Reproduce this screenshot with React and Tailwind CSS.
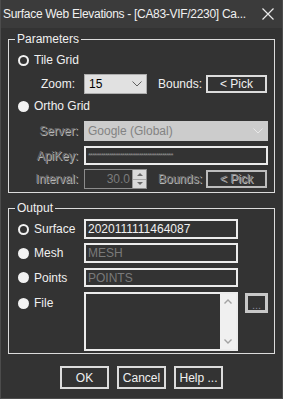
import React from "react";

/* ─── Small pieces ─────────────────────────────────────── */

function Radio({ checked }) {
  return checked ? (
    <span className="inline-block w-[11px] h-[11px] rounded-full border-2 border-[#f2f2f2] bg-[#333333] shrink-0" />
  ) : (
    <span className="inline-block w-[11px] h-[11px] rounded-full bg-[#f2f2f2] shrink-0" />
  );
}

function Chevron({ color = "#606060" }) {
  return (
    <svg width="10" height="6" viewBox="0 0 10 6" className="shrink-0">
      <path d="M0.5 0.5 L5 5 L9.5 0.5" fill="none" stroke={color} strokeWidth="1" />
    </svg>
  );
}

function GroupBox({ title, className = "", children }) {
  return (
    <div className={`relative mx-[7px] border border-[#dcdcdc] ${className}`}>
      <span className="absolute -top-[9px] left-[6px] bg-[#333333] px-[2px] leading-[16px] text-[#f0f0f0]">
        {title}
      </span>
      {children}
    </div>
  );
}

function PickButton({ disabled }) {
  return (
    <div
      className={`w-[61px] h-[18px] border-2 flex items-center justify-center leading-none ${
        disabled
          ? "border-[#bdbdbd] text-[#8c8c8c] [text-shadow:1px_1px_0_#bcbcbc]"
          : "border-[#dcdcdc] text-[#f0f0f0]"
      }`}
    >
      &lt; Pick
    </div>
  );
}

const dimLabel = "text-[#6a6a6a] [text-shadow:1px_1px_0_#b8b8b8]";

/* ─── Main ─────────────────────────────────────────────── */

export default function App() {
  return (
    <div className="w-[283px] h-[399px] bg-[#333333] border border-t-0 border-[#4c4c4c] text-[12px] font-['Liberation_Sans',Arial,sans-serif] select-none overflow-hidden">
      {/* Title bar */}
      <div className="h-[28px] bg-[#3b3b3b] flex items-center pl-[3px] pr-[9px] -mx-px">
        <span className="text-[#f0f0f0] text-[12px] tracking-[-0.3px] whitespace-nowrap">
          Surface Web Elevations - [CA83-VIF/2230] Ca...
        </span>
        <svg width="12" height="12" viewBox="0 0 12 12" className="ml-auto">
          <path d="M0.5 0.5 L11.5 11.5 M11.5 0.5 L0.5 11.5" stroke="#eaeaea" strokeWidth="1.2" />
        </svg>
      </div>

      {/* Parameters */}
      <GroupBox title="Parameters" className="mt-[11px] h-[154px]">
        {/* Tile grid */}
        <div className="mt-[13px] h-[14px] pl-[9px] flex items-center gap-[5px] text-[#f0f0f0]">
          <Radio checked />
          <span>Tile Grid</span>
        </div>

        <div className="mt-[7px] h-[20px] flex items-center">
          <span className="w-[66px] text-right text-[#f0f0f0]">Zoom:</span>
          <div className="ml-[9px] w-[63px] h-[20px] bg-[#e1e1e1] border border-[#adadad] flex items-center pl-[4px] pr-[4px] text-[#000000]">
            <span>15</span>
            <span className="ml-auto"><Chevron /></span>
          </div>
          <span className="ml-[11px] w-[48px] text-[#f0f0f0]">Bounds:</span>
          <PickButton />
        </div>

        {/* Ortho grid */}
        <div className="mt-[5px] h-[14px] pl-[9px] flex items-center gap-[5px] text-[#f0f0f0]">
          <Radio />
          <span>Ortho Grid</span>
        </div>

        <div className="mt-[8px] h-[20px] flex items-center">
          <span className={`w-[69px] text-right ${dimLabel}`}>Server:</span>
          <div className="ml-[6px] w-[184px] h-[20px] bg-[#cccccc] flex items-center pl-[4px] pr-[5px] text-[#838383]">
            <span>Google (Global)</span>
            <span className="ml-auto"><Chevron color="#e8e8e8" /></span>
          </div>
        </div>

        <div className="mt-[5px] h-[19px] flex items-center">
          <span className={`w-[69px] text-right ${dimLabel}`}>ApiKey:</span>
          <div className="ml-[6px] w-[184px] h-[19px] border-2 border-[#ececec] flex items-center pl-[2px] overflow-hidden">
            <span className="text-[8px] leading-none tracking-[-1px] text-[#8a8a8a] whitespace-nowrap">
              {"*".repeat(40)}
            </span>
          </div>
        </div>

        <div className="mt-[4px] h-[20px] flex items-center">
          <span className={`w-[69px] text-right ${dimLabel}`}>Interval:</span>
          <div className="ml-[6px] w-[63px] h-[20px] border border-[#8c8c8c] flex items-stretch">
            <span className="flex-1 text-right pr-[2px] leading-[18px] text-[#7c7c7c]">30.0</span>
            <div className="w-[14px] flex flex-col bg-[#dadada] border-l border-[#9a9a9a]">
              <div className="flex-1 flex items-center justify-center border-b border-[#a8a8a8]">
                <span className="w-0 h-0 border-l-[3px] border-r-[3px] border-b-[3px] border-l-transparent border-r-transparent border-b-[#6a6a6a]" />
              </div>
              <div className="flex-1 flex items-center justify-center">
                <span className="w-0 h-0 border-l-[3px] border-r-[3px] border-t-[3px] border-l-transparent border-r-transparent border-t-[#6a6a6a]" />
              </div>
            </div>
          </div>
          <span className={`ml-[11px] w-[48px] ${dimLabel}`}>Bounds:</span>
          <PickButton disabled />
        </div>
      </GroupBox>

      {/* Output */}
      <GroupBox title="Output" className="mt-[15px] h-[146px]">
        {[
          { label: "Surface", value: "2020111111464087", checked: true, mt: "mt-[10px]", h: "h-[20px]" },
          { label: "Mesh", value: "MESH", mt: "mt-[4px]", h: "h-[20px]" },
          { label: "Points", value: "POINTS", mt: "mt-[5px]", h: "h-[19px]" },
        ].map((r) => (
          <div key={r.label} className={`${r.mt} ${r.h} flex items-center`}>
            <div className="w-[75px] pl-[9px] flex items-center gap-[5px] text-[#f0f0f0]">
              <Radio checked={r.checked} />
              <span>{r.label}</span>
            </div>
            <div
              className={`w-[154px] ${r.h} border-2 border-[#ececec] flex items-center pl-[2px] ${
                r.checked ? "text-[#f0f0f0]" : "text-[#7a7a7a]"
              }`}
            >
              {r.value}
            </div>
          </div>
        ))}

        <div className="mt-[5px] h-[59px] flex items-start">
          <div className="w-[75px] pl-[9px] mt-[2px] flex items-center gap-[5px] text-[#f0f0f0]">
            <Radio />
            <span>File</span>
          </div>
          <div className="w-[154px] h-[59px] border-2 border-[#ececec] flex">
            <div className="flex-1" />
            <div className="w-[16px] bg-[#f0f0f0] flex flex-col items-center justify-between py-[5px]">
              <svg width="8" height="5" viewBox="0 0 8 5">
                <path d="M0.5 4.5 L4 1 L7.5 4.5" fill="none" stroke="#a3a3a3" strokeWidth="1.4" />
              </svg>
              <svg width="8" height="5" viewBox="0 0 8 5">
                <path d="M0.5 0.5 L4 4 L7.5 0.5" fill="none" stroke="#a3a3a3" strokeWidth="1.4" />
              </svg>
            </div>
          </div>
          <div className="ml-[7px] mt-[1px] w-[23px] h-[20px] border-[3px] border-[#c8c8c8] flex items-end justify-center pb-px">
            <span className="text-[11px] leading-[8px] text-[#8a8a9a]">...</span>
          </div>
        </div>
      </GroupBox>

      {/* Buttons */}
      <div className="mt-[12px] flex justify-center gap-[8px]">
        {["OK", "Cancel", "Help ..."].map((b) => (
          <div
            key={b}
            className="w-[49px] h-[23px] border-2 border-[#dcdcdc] flex items-center justify-center text-[#f0f0f0]"
          >
            {b}
          </div>
        ))}
      </div>
    </div>
  );
}
